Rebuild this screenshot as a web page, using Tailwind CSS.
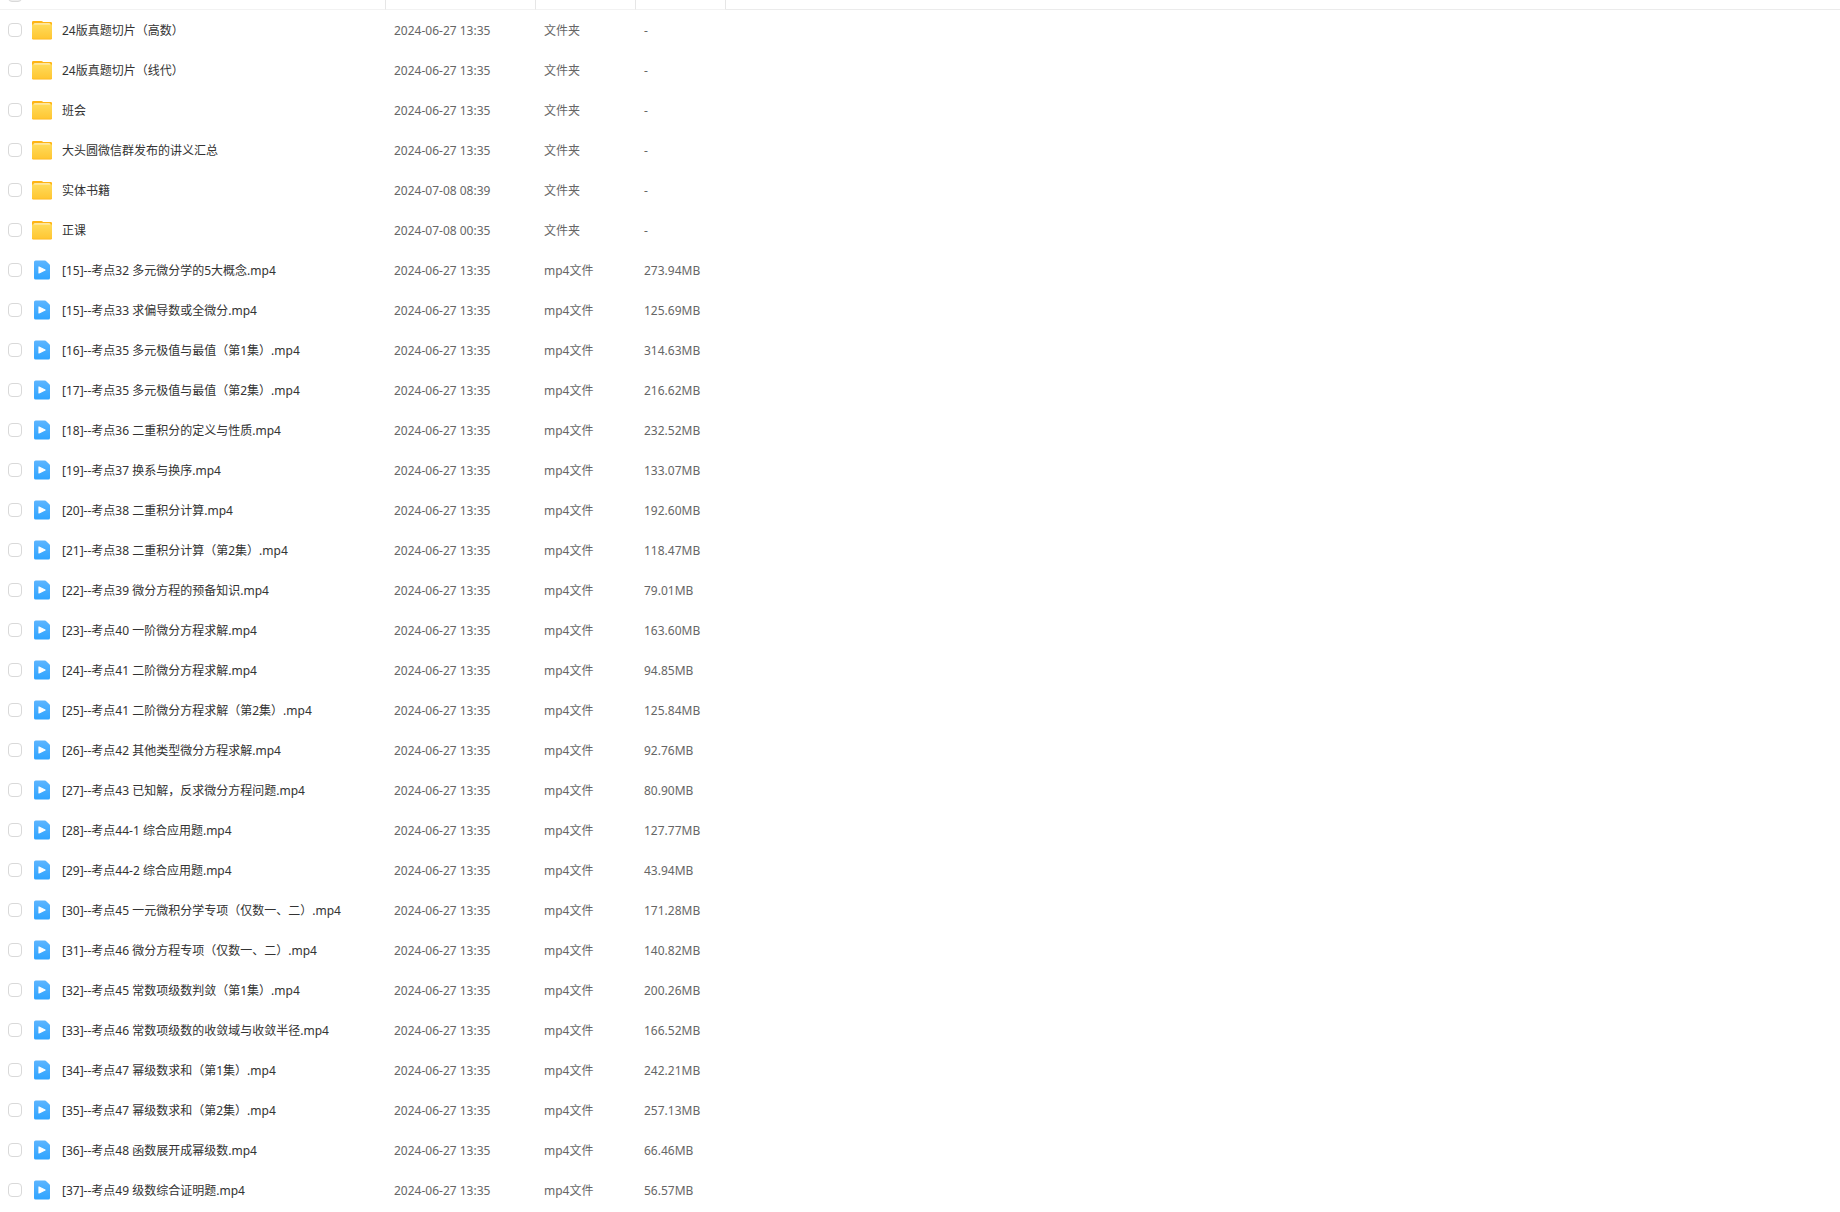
<!DOCTYPE html>
<html lang="zh-CN">
<head>
    <meta charset="UTF-8">
    <meta name="viewport" content="width=device-width, initial-scale=1.0">
    <title>文件列表</title>
    <script src="https://cdn.jsdelivr.net/npm/@tailwindcss/browser@4"></script>
</head>
<body class="bg-white font-['Noto_Sans','Noto_Sans_CJK_SC',sans-serif] text-xs text-[#666]">

    <!-- gradients shared by the row icons -->
    <svg class="absolute w-0 h-0" aria-hidden="true">
        <defs>
            <linearGradient id="folderFill" x1="0" y1="0" x2="0" y2="1">
                <stop offset="0" stop-color="#ffdc5c"/>
                <stop offset="1" stop-color="#ffc633"/>
            </linearGradient>
            <linearGradient id="videoFill" x1="0" y1="0" x2="0" y2="1">
                <stop offset="0" stop-color="#5cb5ff"/>
                <stop offset="1" stop-color="#2fa4ff"/>
            </linearGradient>
        </defs>
    </svg>

    <table class="w-full table-fixed border-separate border-spacing-0">
        <colgroup>
            <col class="w-[386px]">
            <col class="w-[150px]">
            <col class="w-[100px]">
            <col class="w-[90px]">
            <col>
        </colgroup>
        <thead>
            <tr>
                <th class="p-0 border-r border-b border-r-[#e6e6e6] border-b-[#f2f2f2]">
                    <div class="flex items-end h-[9px] pl-2 pb-[7px] overflow-hidden">
                        <input type="checkbox" aria-label="全选" class="appearance-none shrink-0 size-[14px] rounded border border-[#d9d9d9] bg-[#eee]">
                    </div>
                </th>
                <th class="p-0 border-r border-b border-r-[#e6e6e6] border-b-[#f2f2f2]"></th>
                <th class="p-0 border-r border-b border-r-[#e6e6e6] border-b-[#f2f2f2]"></th>
                <th class="p-0 border-r border-b border-r-[#e6e6e6] border-b-[#f2f2f2]"></th>
                <th class="p-0 border-b border-[#ebebeb]"></th>
            </tr>
        </thead>
        <tbody id="fileList"></tbody>
    </table>

    <script>
const files = [
    ['24版真题切片（高数）', '2024-06-27 13:35'],
    ['24版真题切片（线代）', '2024-06-27 13:35'],
    ['班会', '2024-06-27 13:35'],
    ['大头圆微信群发布的讲义汇总', '2024-06-27 13:35'],
    ['实体书籍', '2024-07-08 08:39'],
    ['正课', '2024-07-08 00:35'],
    ['[15]--考点32 多元微分学的5大概念.mp4', '2024-06-27 13:35', '273.94MB'],
    ['[15]--考点33 求偏导数或全微分.mp4', '2024-06-27 13:35', '125.69MB'],
    ['[16]--考点35 多元极值与最值（第1集）.mp4', '2024-06-27 13:35', '314.63MB'],
    ['[17]--考点35 多元极值与最值（第2集）.mp4', '2024-06-27 13:35', '216.62MB'],
    ['[18]--考点36 二重积分的定义与性质.mp4', '2024-06-27 13:35', '232.52MB'],
    ['[19]--考点37 换系与换序.mp4', '2024-06-27 13:35', '133.07MB'],
    ['[20]--考点38 二重积分计算.mp4', '2024-06-27 13:35', '192.60MB'],
    ['[21]--考点38 二重积分计算（第2集）.mp4', '2024-06-27 13:35', '118.47MB'],
    ['[22]--考点39 微分方程的预备知识.mp4', '2024-06-27 13:35', '79.01MB'],
    ['[23]--考点40 一阶微分方程求解.mp4', '2024-06-27 13:35', '163.60MB'],
    ['[24]--考点41 二阶微分方程求解.mp4', '2024-06-27 13:35', '94.85MB'],
    ['[25]--考点41 二阶微分方程求解（第2集）.mp4', '2024-06-27 13:35', '125.84MB'],
    ['[26]--考点42 其他类型微分方程求解.mp4', '2024-06-27 13:35', '92.76MB'],
    ['[27]--考点43 已知解，反求微分方程问题.mp4', '2024-06-27 13:35', '80.90MB'],
    ['[28]--考点44-1 综合应用题.mp4', '2024-06-27 13:35', '127.77MB'],
    ['[29]--考点44-2 综合应用题.mp4', '2024-06-27 13:35', '43.94MB'],
    ['[30]--考点45 一元微积分学专项（仅数一、二）.mp4', '2024-06-27 13:35', '171.28MB'],
    ['[31]--考点46 微分方程专项（仅数一、二）.mp4', '2024-06-27 13:35', '140.82MB'],
    ['[32]--考点45 常数项级数判敛（第1集）.mp4', '2024-06-27 13:35', '200.26MB'],
    ['[33]--考点46 常数项级数的收敛域与收敛半径.mp4', '2024-06-27 13:35', '166.52MB'],
    ['[34]--考点47 幂级数求和（第1集）.mp4', '2024-06-27 13:35', '242.21MB'],
    ['[35]--考点47 幂级数求和（第2集）.mp4', '2024-06-27 13:35', '257.13MB'],
    ['[36]--考点48 函数展开成幂级数.mp4', '2024-06-27 13:35', '66.46MB'],
    ['[37]--考点49 级数综合证明题.mp4', '2024-06-27 13:35', '56.57MB'],
];

const folderIcon = `
    <svg class="size-5 shrink-0" viewBox="0 0 20 20" aria-hidden="true">
        <path d="M0 2.2Q0 1 1.2 1H9.4Q10.1 1 10.6 1.5L11.1 2H18.8Q20 2 20 3.2V18.3Q20 19.5 18.8 19.5H1.2Q0 19.5 0 18.3Z" fill="#ffb414"/>
        <path d="M0 5.2Q1 4 2 3.6H18Q19 4 20 5.2V17.6Q20 18.8 18.8 18.8H1.2Q0 18.8 0 17.6Z" fill="url(#folderFill)"/>
        <path d="M2 4.6V4Q2 3.2 2.8 3.2H17.2Q18 3.2 18 4V4.6Z" fill="#fff0c0"/>
    </svg>`;

const videoIcon = `
    <svg class="size-5 shrink-0" viewBox="0 0 20 20" aria-hidden="true">
        <path d="M2 2Q2 .4 3.6 .4H12.6Q13.2 .4 13.7 .8L17.4 4.3Q18 4.8 18 5.5V18Q18 19.6 16.4 19.6H3.6Q2 19.6 2 18Z" fill="url(#videoFill)"/>
        <path d="M7 7V13L13.1 10Z" fill="#fff" stroke="#fff" stroke-width="1.2" stroke-linejoin="round"/>
    </svg>`;

document.getElementById('fileList').innerHTML = files.map(([name, date, size], i) => `
    <tr class="hover:bg-gray-50">
        <td class="p-0">
            <div class="flex items-center h-10 pl-2">
                <input type="checkbox" id="file${i}" class="appearance-none shrink-0 size-[14px] rounded border border-[#d9d9d9] bg-white checked:bg-blue-500">
                <label for="file${i}" class="flex items-center gap-[10px] ml-[10px] text-[#333] whitespace-nowrap">
                    ${size ? videoIcon : folderIcon}
                    <span class="pt-0.5">${name}</span>
                </label>
            </div>
        </td>
        <td class="pt-0.5 pb-0 pl-2 pr-0">${date}</td>
        <td class="pt-0.5 pb-0 pl-2 pr-0">${size ? 'mp4文件' : '文件夹'}</td>
        <td class="pt-0.5 pb-0 pl-2 pr-0">${size || '-'}</td>
        <td class="p-0"></td>
    </tr>
`).join('');
    </script>
</body>
</html>
